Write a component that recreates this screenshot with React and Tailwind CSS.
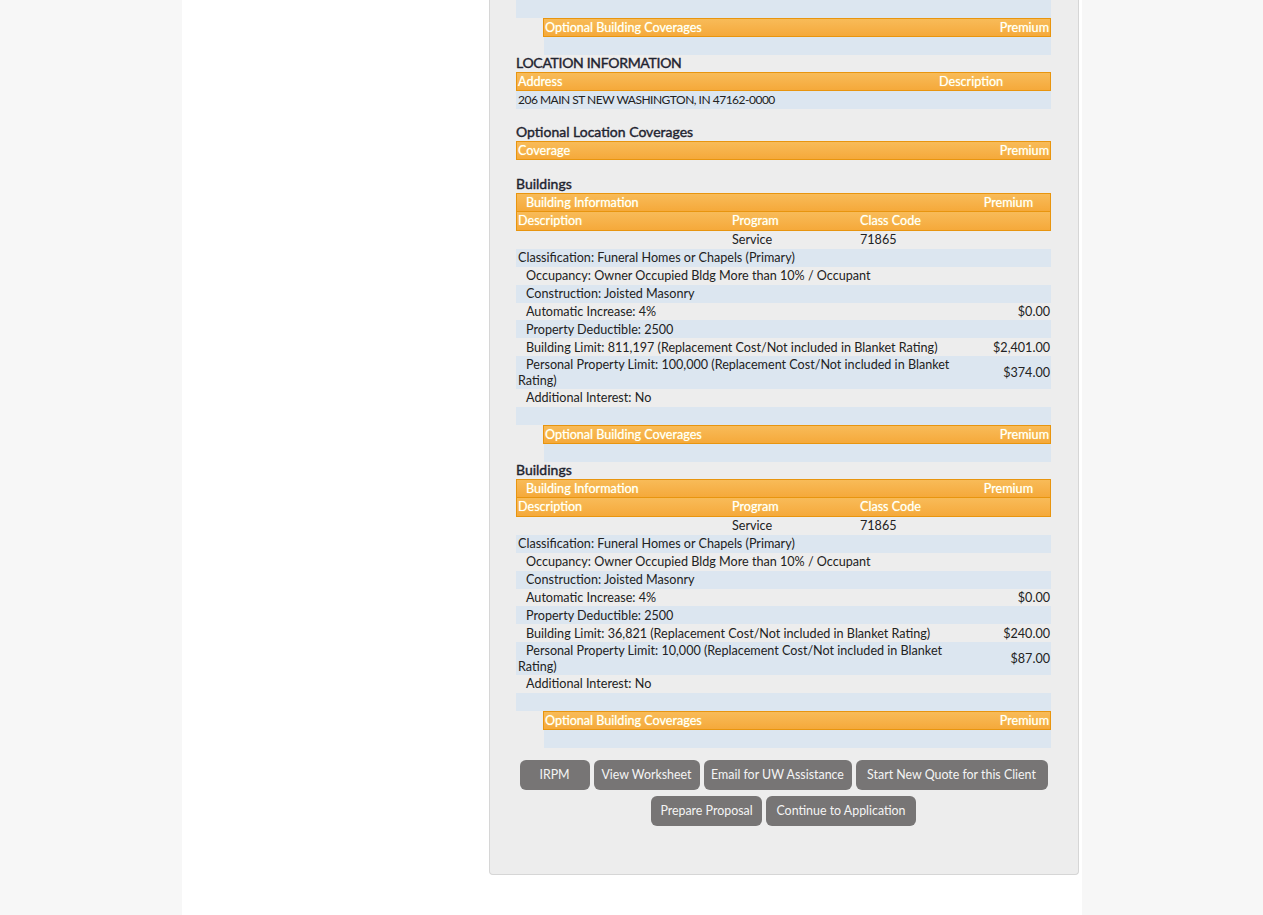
import React from "react";

const font = { fontFamily: "Lato, 'Open Sans', 'DejaVu Sans', sans-serif" };

function OrangeHeader({ children, className = "" }) {
  return (
    <div
      className={
        "h-[19px] border border-[#e8950f] bg-gradient-to-b from-[#f8bb58] to-[#f5a93a] text-white text-[12.6px] leading-[17px] [text-shadow:0_0_1px_#fff6a0] " +
        className
      }
    >
      {children}
    </div>
  );
}

function Heading({ children, className = "" }) {
  return (
    <div className={"text-[14px] text-[#1f2430] leading-[16px] mb-[1px] [-webkit-text-stroke:0.4px_#1f2430] " + className}>
      {children}
    </div>
  );
}

function OptionalCoverages() {
  return (
    <div>
      <OrangeHeader className="ml-[27px] flex justify-between px-[1px]">
        <span>Optional Building Coverages</span>
        <span>Premium</span>
      </OrangeHeader>
      <div className="ml-[28px] h-[18px] bg-[#dce6f0]" />
    </div>
  );
}

function Row({ text, premium, blue, indent = true }) {
  return (
    <div className={"flex items-center text-[12.6px] leading-[15.25px] text-[#222] " + (blue ? "bg-[#dce6f0]" : "")}>
      <div className={"flex-1 py-[1.3px] pl-[2px] " + (indent ? "indent-2" : "")}>{text}</div>
      <div className="w-[96px] text-right pr-[1px]">{premium}</div>
    </div>
  );
}

function Building({ limit, limitPrem, ppLimit, ppPrem }) {
  return (
    <div>
      <Heading>Buildings</Heading>
      <OrangeHeader className="flex justify-between pl-[9px] pr-[17px]">
        <span>Building Information</span>
        <span>Premium</span>
      </OrangeHeader>
      <OrangeHeader className="grid grid-cols-[214px_128px_1fr] border-t-0 h-[19px] pl-[1px] leading-[18px]">
        <span>Description</span>
        <span>Program</span>
        <span>Class Code</span>
      </OrangeHeader>
      <div className="grid grid-cols-[214px_128px_1fr] h-[18px] text-[12.6px] leading-[18px] text-[#222] pl-[2px]">
        <span></span>
        <span>Service</span>
        <span>71865</span>
      </div>
      <Row blue indent={false} text="Classification: Funeral Homes or Chapels (Primary)" />
      <Row text="Occupancy: Owner Occupied Bldg More than 10% / Occupant" />
      <Row blue text="Construction: Joisted Masonry" />
      <Row text="Automatic Increase: 4%" premium="$0.00" />
      <Row blue text="Property Deductible: 2500" />
      <Row text={`Building Limit: ${limit} (Replacement Cost/Not included in Blanket Rating)`} premium={limitPrem} />
      <Row blue text={`Personal Property Limit: ${ppLimit} (Replacement Cost/Not included in Blanket Rating)`} premium={ppPrem} />
      <Row text="Additional Interest: No" />
      <div className="h-[18px] bg-[#dce6f0]" />
      <OptionalCoverages />
    </div>
  );
}

function Btn({ children, className = "" }) {
  return (
    <button className={"h-[30px] rounded-[6px] bg-[#777575] text-[#f4f4f4] text-[12.4px] px-[4px] " + className} style={font}>
      {children}
    </button>
  );
}

export default function App() {
  return (
    <div className="flex min-h-[915px] bg-[#f7f7f7]" style={font}>
      <div className="w-[182px] shrink-0" />
      <div className="w-[900px] shrink-0 bg-white h-[915px] overflow-hidden">
        <div className="ml-[307px] w-[590px] border border-t-0 border-[#d6d6d6] rounded-b-[4px] bg-[#ededed] pl-[26px] pr-[27px] pb-[48px]">
          <div className="h-[18px] bg-[#dce6f0]" />
          <OptionalCoverages />

          <Heading className="text-[13px] tracking-[-0.3px]">LOCATION INFORMATION</Heading>
          <OrangeHeader className="flex pl-[1px]">
            <span className="w-[421px]">Address</span>
            <span>Description</span>
          </OrangeHeader>
          <div className="h-[18px] bg-[#dce6f0] text-[12px] tracking-[-0.5px] leading-[18px] text-[#222] pl-[2px]">
            206 MAIN ST NEW WASHINGTON, IN 47162-0000
          </div>

          <Heading className="mt-[15px]">Optional Location Coverages</Heading>
          <OrangeHeader className="flex justify-between px-[1px]">
            <span>Coverage</span>
            <span>Premium</span>
          </OrangeHeader>

          <div className="mt-[16px]">
            <Building limit="811,197" limitPrem="$2,401.00" ppLimit="100,000" ppPrem="$374.00" />
          </div>
          <div>
            <Building limit="36,821" limitPrem="$240.00" ppLimit="10,000" ppPrem="$87.00" />
          </div>

          <div className="mt-[12px] flex flex-col items-center gap-[6px]">
            <div className="flex gap-[4px]">
              <Btn className="w-[70px]">IRPM</Btn>
              <Btn className="w-[106px]">View Worksheet</Btn>
              <Btn className="w-[148px]">Email for UW Assistance</Btn>
              <Btn className="w-[192px]">Start New Quote for this Client</Btn>
            </div>
            <div className="flex gap-[4px]">
              <Btn className="w-[111px]">Prepare Proposal</Btn>
              <Btn className="w-[150px]">Continue to Application</Btn>
            </div>
          </div>
        </div>
      </div>
    </div>
  );
}
